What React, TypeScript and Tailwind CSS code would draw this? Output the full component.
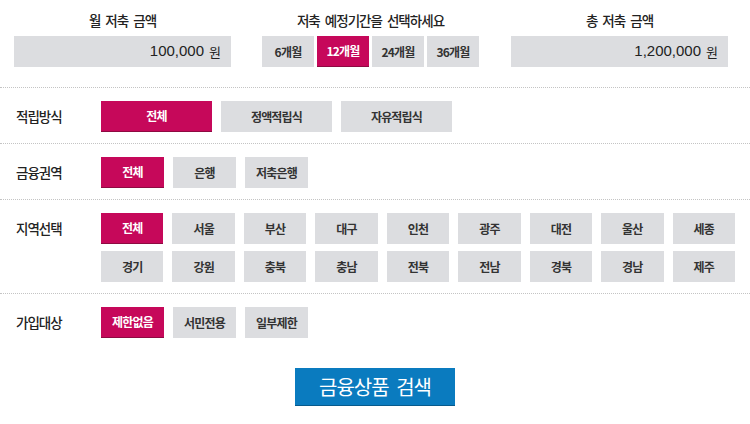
import React, { useState } from "react";

const regions = [
  "전체", "서울", "부산", "대구", "인천", "광주", "대전", "울산", "세종",
  "경기", "강원", "충북", "충남", "전북", "전남", "경북", "경남", "제주",
];

const font = { fontFamily: '"Noto Sans CJK KR", "Noto Sans", sans-serif' };

function Chip({
  label,
  active,
  onClick,
  className = "",
}: {
  label: string;
  active: boolean;
  onClick: () => void;
  className?: string;
}) {
  return (
    <button
      onClick={onClick}
      className={`h-[31px] flex items-center justify-center text-[12px] tracking-[-0.8px] font-bold ${
        active
          ? "bg-[#c6085a] text-white border-b border-[#8e0a42]"
          : "bg-[#dcdde0] text-[#333]"
      } ${className}`}
    >
      {label}
    </button>
  );
}

function Row({
  title,
  children,
  last = false,
}: {
  title: string;
  children: React.ReactNode;
  last?: boolean;
}) {
  return (
    <div
      className={`flex items-start pt-[13px] pb-[11px] ${
        last ? "" : "border-b border-dotted border-[#c4c4c4]"
      }`}
    >
      <div className="w-[101px] pl-[16px] h-[31px] flex items-center text-[13.5px] font-medium tracking-[-1px] text-[#222]">
        {title}
      </div>
      {children}
    </div>
  );
}

export default function App() {
  const [period, setPeriod] = useState("12개월");
  const [method, setMethod] = useState("전체");
  const [sector, setSector] = useState("전체");
  const [region, setRegion] = useState("전체");
  const [target, setTarget] = useState("제한없음");

  return (
    <div className="w-[750px] h-[424px] bg-white overflow-hidden" style={font}>
      {/* Top summary */}
      <div className="flex pl-[14px] gap-[31px] pt-[11px] pb-[20px] border-b border-dotted border-[#c4c4c4]">
        <div className="w-[217px] flex flex-col items-center gap-[7px]">
          <div className="h-[18px] text-[13.5px] font-medium tracking-[-1px] [word-spacing:3px] text-[#222] leading-[18px]">월 저축 금액</div>
          <div className="w-full h-[31px] bg-[#dcdde0] flex items-center justify-end pr-[10px] text-[#222]">
            <span className="text-[15px]" style={{ fontFamily: '"Liberation Sans", sans-serif' }}>100,000</span>
            <span className="text-[13px] ml-[5px]">원</span>
          </div>
        </div>
        <div className="w-[217px] flex flex-col items-center gap-[7px]">
          <div className="h-[18px] text-[13.5px] font-medium tracking-[-1px] [word-spacing:3px] text-[#222] leading-[18px] whitespace-nowrap">
            저축 예정기간을 선택하세요
          </div>
          <div className="w-full grid grid-cols-4 gap-[3px]">
            {["6개월", "12개월", "24개월", "36개월"].map((p) => (
              <Chip key={p} label={p} active={period === p} onClick={() => setPeriod(p)} />
            ))}
          </div>
        </div>
        <div className="w-[217px] ml-[1px] flex flex-col items-center gap-[7px]">
          <div className="h-[18px] text-[13.5px] font-medium tracking-[-1px] [word-spacing:3px] text-[#222] leading-[18px]">총 저축 금액</div>
          <div className="w-full h-[31px] bg-[#dcdde0] flex items-center justify-end pr-[10px] text-[#222]">
            <span className="text-[15px]" style={{ fontFamily: '"Liberation Sans", sans-serif' }}>1,200,000</span>
            <span className="text-[13px] ml-[5px]">원</span>
          </div>
        </div>
      </div>

      <Row title="적립방식">
        <div className="flex gap-[9px]">
          {["전체", "정액적립식", "자유적립식"].map((m) => (
            <Chip key={m} label={m} active={method === m} onClick={() => setMethod(m)} className="w-[111px]" />
          ))}
        </div>
      </Row>

      <Row title="금융권역">
        <div className="flex gap-[9px]">
          {["전체", "은행", "저축은행"].map((s) => (
            <Chip key={s} label={s} active={sector === s} onClick={() => setSector(s)} className="w-[63px]" />
          ))}
        </div>
      </Row>

      <Row title="지역선택">
        <div className="w-[634px] grid grid-cols-9 gap-x-[9px] gap-y-[7px]">
          {regions.map((r, i) => (
            <Chip
              key={r + i}
              label={r}
              active={i === 0 && region === r}
              onClick={() => setRegion(r)}
            />
          ))}
        </div>
      </Row>

      <Row title="가입대상" last>
        <div className="flex gap-[9px]">
          {["제한없음", "서민전용", "일부제한"].map((t) => (
            <Chip key={t} label={t} active={target === t} onClick={() => setTarget(t)} className="w-[63px]" />
          ))}
        </div>
      </Row>

      <div className="flex justify-center pt-[19px]">
        <button className="w-[160px] h-[38px] bg-[#0a7bbf] text-white text-[20px] tracking-[-1px] [word-spacing:4px] border-b border-[#075a8c]">
          금융상품 검색
        </button>
      </div>
    </div>
  );
}
